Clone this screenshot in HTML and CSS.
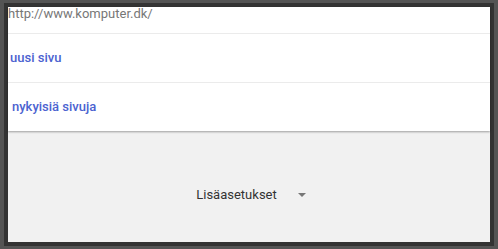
FILE: index.html
```html
<!DOCTYPE html>
<html lang="fi">
    <head>
        <meta charset="UTF-8">
        <meta name="viewport" content="width=device-width, initial-scale=1.0">
        <title>Aloitussivut</title>
        <link rel="stylesheet" href="styles.css">
    </head>
<body>
    <div class="frame">
        <div class="pages">
            <div class="row url">http://www.komputer.dk/</div>
            <div class="row link">uusi sivu</div>
            <div class="row link current">nykyisiä sivuja</div>
        </div>
        <div class="advanced">
            <span class="label">Lisäasetukset</span>
            <span class="arrow"></span>
        </div>
    </div>
</body>
</html>
```

FILE: styles.css
```css
html, body {
    margin: 0;
    padding: 0;
    height: 100%;
}
body {
    font-family: Roboto, "Noto Sans", sans-serif;
    background-color: #545454;
    padding: 3px 4px 3px 4px;
    box-sizing: border-box;
}
.frame {
    height: 100%;
    box-sizing: border-box;
    border: 4px solid #333;
    display: flex;
    flex-direction: column;
    background-color: #f1f1f1;
}
.pages {
    background-color: #fff;
    box-shadow: 0 1px 2px rgba(0, 0, 0, 0.35);
    position: relative;
}
.row {
    height: 48px;
    display: flex;
    align-items: center;
    border-top: 1px solid #ebebeb;
    box-sizing: border-box;
    padding-bottom: 2px;
}
.url {
    height: 26px;
    border-top: none;
    padding-bottom: 0;
    font-size: 13px;
    line-height: 13px;
    color: #777;
    align-items: flex-start;
}
.row + .row {
    height: 49px;
}
.link {
    font-size: 13px;
    font-weight: 500;
    color: #4b62d0;
    padding-left: 2px;
}
.current {
    padding-left: 4px;
}
.advanced {
    flex: 1;
    display: flex;
    justify-content: center;
    align-items: center;
    padding-top: 16px;
    padding-left: 4px;
    font-size: 13px;
    color: #333;
}
.arrow {
    width: 0;
    height: 0;
    margin-left: 21px;
    border-left: 4px solid transparent;
    border-right: 4px solid transparent;
    border-top: 4px solid #777;
}
```
